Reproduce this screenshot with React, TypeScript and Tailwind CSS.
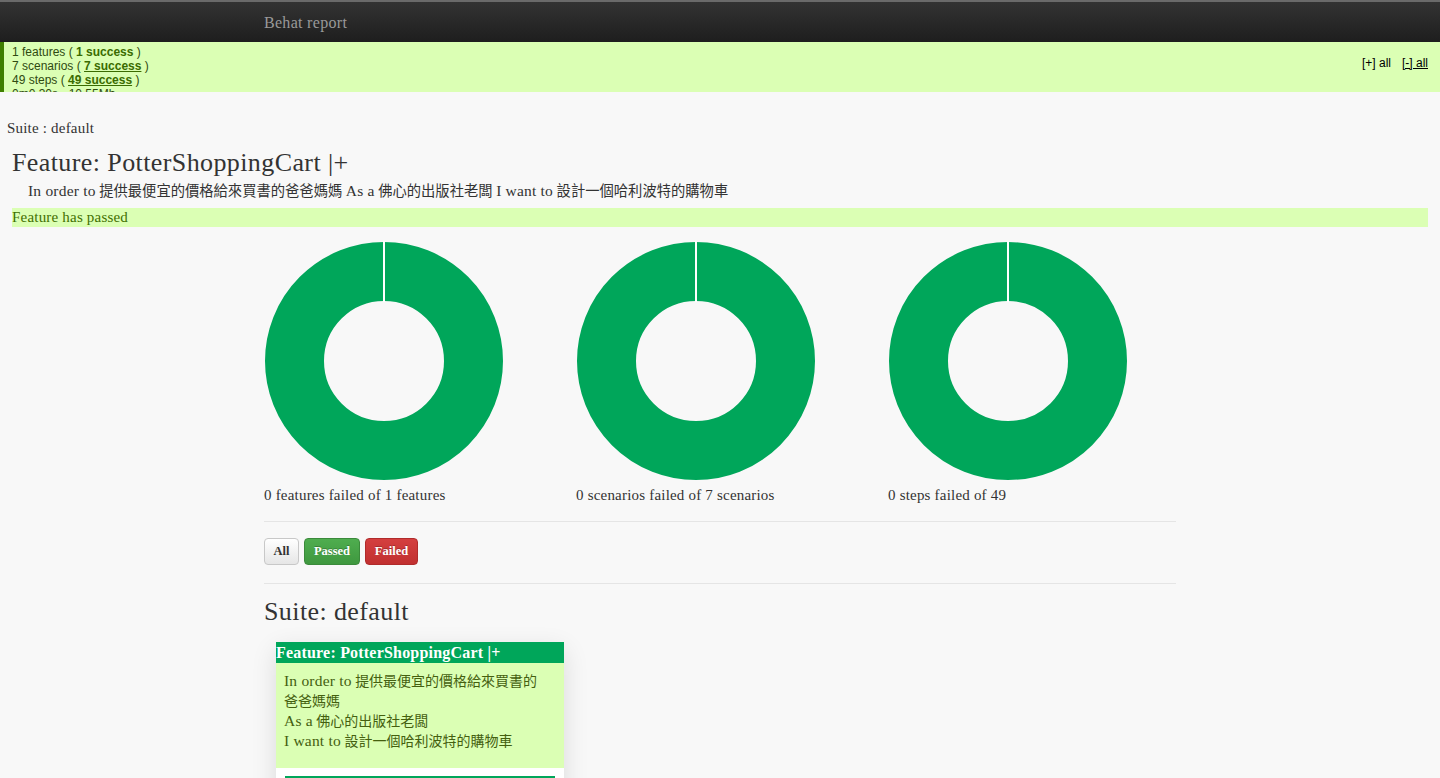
import React from 'react';

const serif = "font-['Liberation_Serif','Noto_Sans_CJK_TC',serif]";

// Latin runs are set a little larger so Liberation Serif takes Georgia's width
const L = ({ children }: { children: React.ReactNode }) => (
  <span className="text-[15.5px] leading-none tracking-[0.2px]">{children}</span>
);

const Donut = () => (
  <svg width="240" height="240" viewBox="0 0 240 240">
    <circle cx="120" cy="120" r="89.5" fill="none" stroke="#00a65a" strokeWidth="59" />
    <line x1="120" y1="0" x2="120" y2="61" stroke="#ffffff" strokeWidth="2" />
  </svg>
);

const App = () => {
  const charts = [
    '0 features failed of 1 features',
    '0 scenarios failed of 7 scenarios',
    '0 steps failed of 49',
  ];

  return (
    <div className={`min-h-[778px] bg-[#f8f8f8] text-[#333] ${serif}`}>
      {/* Navbar */}
      <div className="h-[42px] border-t-2 border-[#6a6a6a] bg-gradient-to-b from-[#333] to-[#1e1e1e]">
        <div className="ml-[264px] pt-[9px] text-[16px] tracking-[0.3px] text-[#999]">Behat report</div>
      </div>

      {/* Summary */}
      <div className="flex h-[50px] overflow-hidden border-l-4 border-[#3f7f00] bg-[#dbffb4] font-['Liberation_Sans',Arial,sans-serif] text-[12px] leading-[14px] text-[#2f4a10]">
        <div className="flex-1 pl-2 pt-[3px]">
          <div>1 features ( <b className="text-[#3a6b00]">1 success</b> )</div>
          <div>7 scenarios ( <b className="text-[#3a6b00] underline">7 success</b> )</div>
          <div>49 steps ( <b className="text-[#3a6b00] underline">49 success</b> )</div>
          <div>0m0.30s - 10.55Mb</div>
        </div>
        <div className="flex gap-[11px] pr-3 pt-[14px] text-black">
          <span>[+] all</span>
          <span className="underline">[-] all</span>
        </div>
      </div>

      {/* Suite header */}
      <div className="pl-[7px] pt-[25px] text-[15px] tracking-[0.2px]">Suite : default</div>
      <div className="px-3">
        <h1 className="mt-[9px] text-[26px] leading-[28px] tracking-[0.4px]">Feature: PotterShoppingCart |+</h1>
        <p className="pl-4 pt-[4px] text-[14.3px] leading-[20px]">
          <L>In order to</L> 提供最便宜的價格給來買書的爸爸媽媽 <L>As a</L> 佛心的出版社老闆 <L>I want to</L> 設計一個哈利波特的購物車
        </p>
        <div className="mt-[7px] h-[19px] bg-[#dbffb4] text-[15px] leading-[19px] tracking-[0.2px] text-[#3f6f00]">Feature has passed</div>
      </div>

      {/* Charts and list */}
      <div className="ml-[264px] w-[912px] pt-[14px]">
        <div className="flex">
          {charts.map((label) => (
            <div key={label} className="w-[312px] shrink-0">
              <Donut />
              <div className="mt-[3px] text-[15px] tracking-[0.2px]">{label}</div>
            </div>
          ))}
        </div>

        <div className="mt-[15px] border-t border-[#e5e5e5]" />

        <div className="mt-[16px] flex gap-[5px] text-[12.5px] font-bold">
          <button className="h-[27px] w-[35px] rounded border border-[#c8c8c8] bg-gradient-to-b from-white to-[#e6e6e6] text-[#333]">All</button>
          <button className="h-[27px] w-[56px] rounded border border-[#3b8a3b] bg-gradient-to-b from-[#4fad4f] to-[#3f983f] text-white [text-shadow:0_-1px_0_rgba(0,0,0,0.25)]">Passed</button>
          <button className="h-[27px] w-[53px] rounded border border-[#b02b2b] bg-gradient-to-b from-[#d43f3f] to-[#c13030] text-white [text-shadow:0_-1px_0_rgba(0,0,0,0.25)]">Failed</button>
        </div>

        <div className="mt-[18px] border-t border-[#e5e5e5]" />

        <h2 className="mt-[14px] text-[26px] leading-[28px] tracking-[0.4px]">Suite: default</h2>

        <div className="ml-3 mt-[16px] w-[288px] bg-white shadow-[0_8px_24px_rgba(0,0,0,0.12)]">
          <div className="h-[21px] bg-[#00a65a] text-[16px] font-bold leading-[21px] tracking-[0.2px] text-white">Feature: PotterShoppingCart |+</div>
          <div className="bg-[#dbffb4] pb-[16px] pl-2 pr-4 pt-[9px] text-[14px] leading-[20px] text-[#44600f]">
            <div><L>In order to</L> 提供最便宜的價格給來買書的爸爸媽媽</div>
            <div><L>As a</L> 佛心的出版社老闆</div>
            <div><L>I want to</L> 設計一個哈利波特的購物車</div>
          </div>
          <div className="px-[9px] pt-[8px] pb-4">
            <div className="h-[30px] border-t-2 border-[#00a65a] bg-white" />
          </div>
        </div>
      </div>
    </div>
  );
};

export default App;
